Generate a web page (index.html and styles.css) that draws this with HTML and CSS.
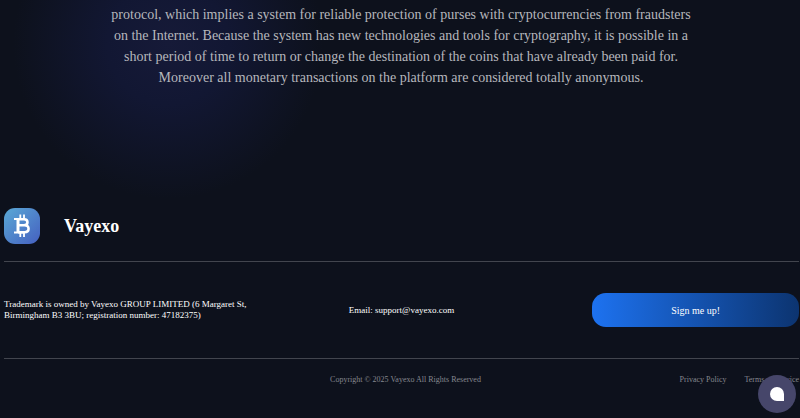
FILE: index.html
```
<!DOCTYPE html>
<html lang="en">
<head>
    <meta charset="UTF-8">
    <meta name="viewport" content="width=device-width, initial-scale=1.0">
    <title>Vayexo</title>
    <link rel="stylesheet" href="styles.css">
</head>
<body>
    <main class="about">
        <p class="about-text">protocol, which implies a system for reliable protection of purses with cryptocurrencies from fraudsters on the Internet. Because the system has new technologies and tools for cryptography, it is possible in a short period of time to return or change the destination of the coins that have already been paid for. Moreover all monetary transactions on the platform are considered totally anonymous.</p>
    </main>

    <footer class="footer">
        <a href="#" class="brand">
            <svg class="brand-logo" viewBox="0 0 36 36" aria-hidden="true">
                <defs>
                    <linearGradient id="logoFill" x1="0" y1="0" x2="1" y2="1">
                        <stop offset="0" stop-color="#5aa9d6"/>
                        <stop offset="1" stop-color="#4560c0"/>
                    </linearGradient>
                </defs>
                <rect width="36" height="36" rx="11" fill="url(#logoFill)"/>
                <g fill="none" stroke="#fff">
                    <path stroke-width="1.800" d="M16.300 6.500v4M20 6.500v4M16.300 25v4M20 25v4"/>
                    <path stroke-width="2" d="M10 11H19M10 24.500H19"/>
                    <path stroke-width="3" d="M14 11v13.500"/>
                    <path stroke-width="2.600" d="M14 11.300h6c4.600 0 4.600 6 0 6h-6M14 17.300h6.500c5.400 0 5.400 6.900 0 6.900H14"/>
                </g>
            </svg>
            <span class="brand-name">Vayexo</span>
        </a>

        <div class="footer-info">
            <p>Trademark is owned by Vayexo GROUP LIMITED (6 Margaret St, Birmingham B3 3BU; registration number: 47182375)</p>
            <p class="footer-email">Email: support@vayexo.com</p>
            <button type="button" class="signup-button">Sign me up!</button>
        </div>

        <div class="footer-bottom">
            <span class="copyright">Copyright © 2025 Vayexo All Rights Reserved</span>
            <nav class="footer-links">
                <a href="#">Privacy Policy</a>
                <a href="#">Terms of Service</a>
            </nav>
        </div>
    </footer>

    <button type="button" class="chat-button" aria-label="Open chat">
        <svg viewBox="0 0 14 14" width="14" height="14" aria-hidden="true">
            <path fill="#fff" d="M7 0a7 7 0 0 1 7 7v7H7A7 7 0 0 1 7 0z"/>
        </svg>
    </button>
</body>
</html>
```
FILE: styles.css
```
body {
    margin: 0;
    font-family: "Liberation Serif", "Times New Roman", serif;
    font-size: 9px;
    color: #fff;
    background: radial-gradient(circle at 168px 44px, #161a38 0, #121733 60px, #0d111c 155px) no-repeat #0d111c;
}

p {
    margin: 0;
}

a {
    color: inherit;
    text-decoration: none;
}

.about {
    padding: 4px 102px 120px 104px;
}

.about-text {
    font-size: 14px;
    line-height: 21px;
    text-align: center;
    color: #b6b7bc;
}

.footer {
    padding: 0 1px 0 4px;
}

.brand {
    display: flex;
    align-items: center;
    gap: 24px;
    padding-bottom: 17px;
}

.brand-logo {
    width: 36px;
    height: 36px;
}

.brand-name {
    font-size: 18px;
    font-weight: bold;
}

.footer-info {
    display: grid;
    grid-template-columns: 1fr 1fr 1fr;
    align-items: center;
    padding: 31px 0;
    border-top: 1px solid #42454e;
    border-bottom: 1px solid #42454e;
    line-height: 11px;
}

.footer-email {
    text-align: center;
}

.signup-button {
    justify-self: end;
    width: 78%;
    height: 34px;
    border: none;
    border-radius: 14px;
    background: linear-gradient(90deg, #1d72f0, #0c3470);
    color: #fff;
    font-family: inherit;
    font-size: 10px;
    cursor: pointer;
}

.footer-bottom {
    display: grid;
    grid-template-columns: 1fr auto 1fr;
    align-items: center;
    padding: 15px 0 15px 8px;
    font-size: 8px;
    line-height: 11px;
    color: #85878e;
}

.copyright {
    grid-column: 2;
}

.footer-links {
    display: flex;
    justify-content: flex-end;
    gap: 18px;
}

.chat-button {
    display: flex;
    align-items: center;
    justify-content: center;
    position: fixed;
    right: 4px;
    bottom: 5px;
    width: 38px;
    height: 38px;
    padding: 0;
    border: none;
    border-radius: 50%;
    background-color: #46466a;
    cursor: pointer;
}
```
